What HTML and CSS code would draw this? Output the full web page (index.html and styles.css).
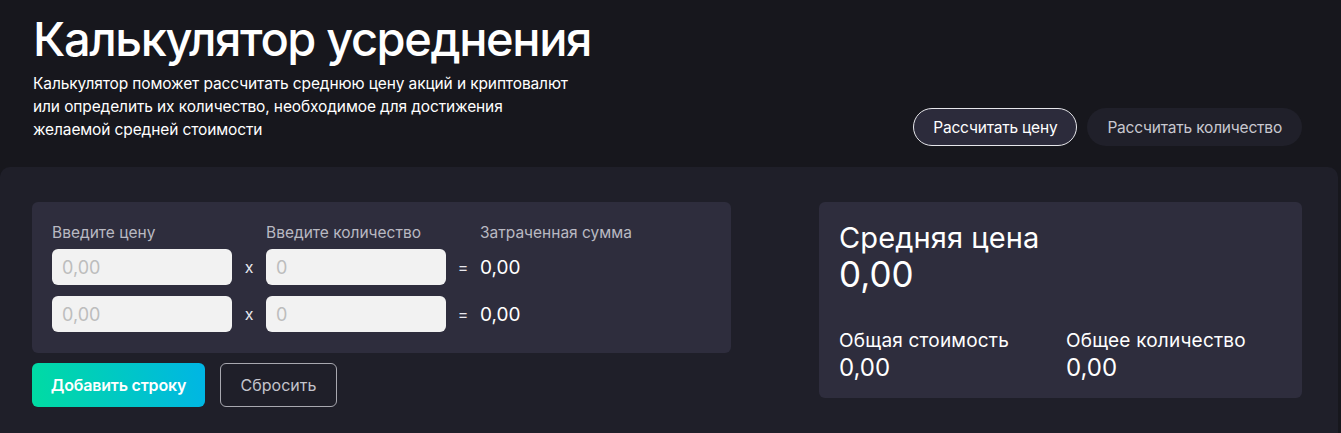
FILE: index.html
```html
<html>
<head>
<meta charset="utf-8">
<link rel="stylesheet" href="styles.css">
</head>
<body>
<div id="top">
    <div class="intro">
        <h1>Калькулятор усреднения</h1>
        <p>Калькулятор поможет рассчитать среднюю цену акций и криптовалют или определить их количество, необходимое для достижения желаемой средней стоимости</p>
    </div>
    <div class="modes">
        <button class="mode active">Рассчитать цену</button>
        <button class="mode">Рассчитать количество</button>
    </div>
</div>

<div id="panel">
    <div class="left">
        <div class="rows">
            <div class="row head">
                <span class="lbl">Введите цену</span>
                <span class="op"></span>
                <span class="lbl">Введите количество</span>
                <span class="op"></span>
                <span class="lbl">Затраченная сумма</span>
            </div>
            <div class="row">
                <input class="field" placeholder="0,00">
                <span class="op">x</span>
                <input class="field" placeholder="0">
                <span class="op">=</span>
                <span class="sum">0,00</span>
            </div>
            <div class="row">
                <input class="field" placeholder="0,00">
                <span class="op">x</span>
                <input class="field" placeholder="0">
                <span class="op">=</span>
                <span class="sum">0,00</span>
            </div>
        </div>
        <div class="actions">
            <button class="add">Добавить строку</button>
            <button class="reset">Сбросить</button>
        </div>
    </div>

    <div class="result">
        <div class="avg-title">Средняя цена</div>
        <div class="avg-value">0,00</div>
        <div class="totals">
            <div class="total">
                <div class="t-title">Общая стоимость</div>
                <div class="t-value">0,00</div>
            </div>
            <div class="total">
                <div class="t-title">Общее количество</div>
                <div class="t-value">0,00</div>
            </div>
        </div>
    </div>
</div>
</body>
</html>
```

FILE: styles.css
```css
body {
    margin: 0;
    background-color: #17171d;
    color: white;
    font-family: Inter, "Noto Sans", sans-serif;
    height: 433px;
    overflow: hidden;
}
button, input {
    font-family: inherit;
}
#top {
    display: flex;
    justify-content: space-between;
    align-items: flex-end;
    padding: 10px 39px 22px 33px;
}
h1 {
    font-size: 47px;
    font-weight: 500;
    letter-spacing: -1.4px;
    margin: 0;
    line-height: 58px;
}
.intro p {
    width: 540px;
    margin: 4px 0 4px 0;
    font-size: 15.5px;
    line-height: 23px;
    letter-spacing: -0.12px;
}
.modes {
    display: flex;
    gap: 10px;
    margin-bottom: -1px;
}
.mode {
    height: 38px;
    border-radius: 19px;
    border: 1px solid transparent;
    background-color: #20202a;
    color: #c8c8d0;
    font-size: 15.5px;
    padding: 0 19px;
    letter-spacing: -0.2px;
}
.mode.active {
    border-color: #e6e6ea;
    background-color: #2c2b3b;
    color: white;
}
#panel {
    background-color: #1f1f29;
    border-radius: 10px 10px 0 0;
    margin-right: 3px;
    height: 266px;
    padding: 35px 36px 0 32px;
    display: flex;
    justify-content: space-between;
    align-items: flex-start;
    box-sizing: border-box;
}
.rows {
    width: 699px;
    background-color: #2e2d3d;
    border-radius: 6px;
    padding: 21px 20px 21px 20px;
    box-sizing: border-box;
}
.row {
    display: flex;
    align-items: center;
    margin-bottom: 11px;
}
.row:last-child {
    margin-bottom: 0;
}
.row.head {
    margin-bottom: 7px;
}
.lbl {
    width: 180px;
    font-size: 15.5px;
    color: #b9b9c2;
    letter-spacing: 0;
}
.op {
    width: 34px;
    text-align: center;
    font-size: 16px;
    color: #e8e8ee;
}
.field {
    width: 180px;
    height: 36px;
    border: none;
    border-radius: 6px;
    background-color: #f2f2f2;
    font-size: 18px;
    padding: 0 10px;
    box-sizing: border-box;
    outline: none;
}
.field::placeholder {
    color: #bdbdbd;
}
.sum {
    font-size: 19px;
    color: white;
}
.actions {
    display: flex;
    gap: 15px;
    margin-top: 10px;
}
.add {
    width: 173px;
    height: 44px;
    border: none;
    border-radius: 6px;
    background: linear-gradient(80deg, #00dca2, #00b5e5);
    color: white;
    font-size: 16px;
    font-weight: 600;
    letter-spacing: -0.2px;
}
.reset {
    width: 117px;
    height: 44px;
    border: 1px solid #a8a8b0;
    border-radius: 6px;
    background-color: transparent;
    color: #c4c4cc;
    font-size: 16px;
    letter-spacing: 0;
}
.result {
    width: 483px;
    height: 196px;
    background-color: #2e2d3d;
    border-radius: 6px;
    padding: 20px 20px;
    box-sizing: border-box;
}
.avg-title {
    font-size: 29px;
    line-height: 32px;
    letter-spacing: 0.1px;
}
.avg-value {
    font-size: 35px;
    line-height: 40px;
}
.totals {
    display: flex;
    margin-top: 35px;
}
.total {
    width: 227px;
    flex-shrink: 0;
}
.t-title {
    font-size: 19px;
    line-height: 24px;
    letter-spacing: 0.2px;
}
.t-value {
    font-size: 24px;
    line-height: 30px;
}
```
